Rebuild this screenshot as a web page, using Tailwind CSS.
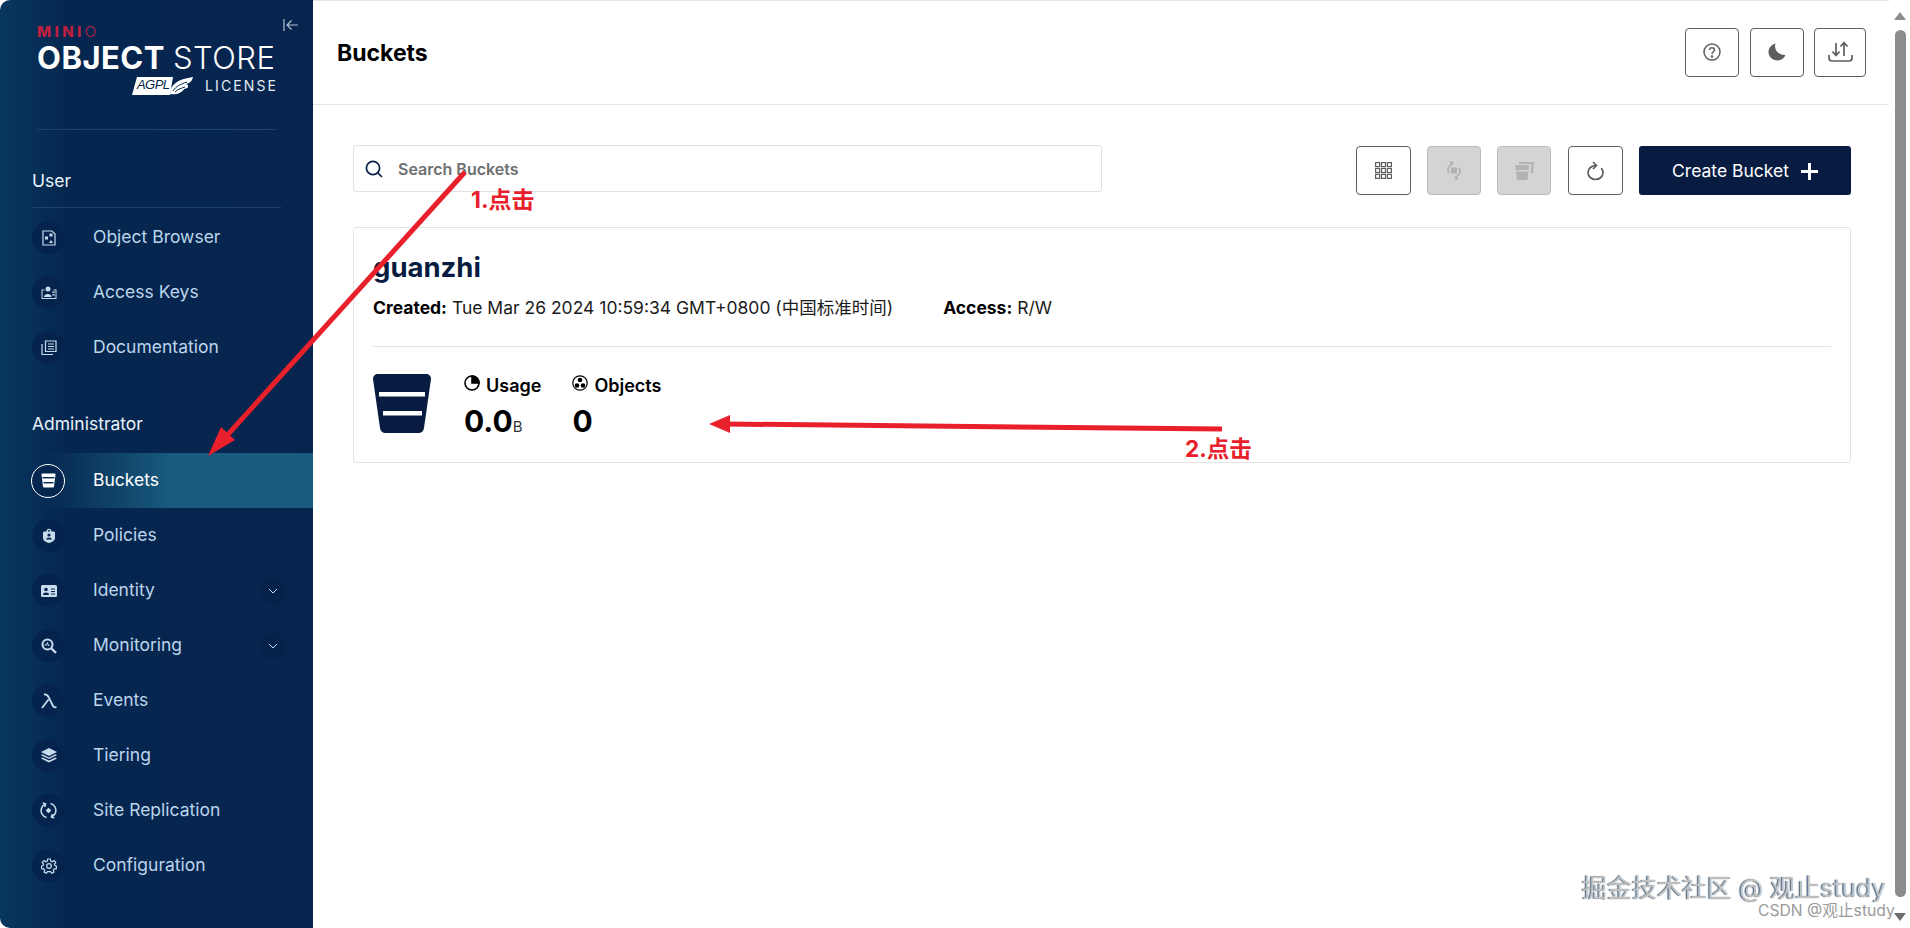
<!DOCTYPE html>
<html lang="en">
  <head>
    <meta charset="UTF-8" />
    <title>MinIO Console - Buckets</title>
    <script src="https://cdn.jsdelivr.net/npm/@tailwindcss/browser@4"></script>
  </head>
  <body class="bg-white font-['Inter','Noto_Sans_CJK_SC',sans-serif]">
    <div class="relative flex h-[928px] w-[1910px] overflow-hidden">
      <!-- sidebar -->
      <aside class="flex h-full w-[313px] shrink-0 flex-col rounded-l-[10px] bg-linear-to-r from-[#08365f] via-[#05274f] via-[22%] to-[#07244f]">
        <div class="relative mx-[37px] h-[130px] border-b border-[#1d4468] pt-[25px]">
          <div class="flex h-[13px] items-center text-[15px] leading-none tracking-[3.4px] text-[#bf2040]">
            <span class="font-extrabold">MINI</span><span class="font-light">O</span>
          </div>
          <div class="mt-[6px] flex h-[26px] items-center whitespace-nowrap text-[31px] leading-none tracking-[0.5px] text-white">
            <span class="font-bold">OBJECT</span><span class="ml-[8px] font-light">STORE</span>
          </div>
          <div class="mt-[6px] flex items-center justify-end gap-[11px]">
            <svg width="62" height="20" viewBox="0 0 62 20">
              <path d="M5 1H41L38 19H0Z" fill="#fff" />
              <path d="M38 18C38 8 47 3 61 1C60 5 58 7 54 8C58 9 56 13 52 13C50 17 44 19 38 18Z" fill="#fff" />
              <path d="M41 15C44 10 49 8 55 6M43 16C46 13 50 12 53 11" stroke="#05264f" fill="none" />
              <text x="5" y="13" font-family="Liberation Sans" font-style="italic" font-size="13" textLength="33" fill="#05264f">AGPL</text>
            </svg>
            <span class="mr-[-2px] text-[14px] leading-none tracking-[2.1px] text-[#e4ecf3]">LICENSE</span>
          </div>
          <svg class="absolute right-[-23px] top-[17px]" width="16" height="16" viewBox="0 0 16 16" fill="none" stroke="#aebfd0" stroke-width="1.2">
            <path d="M1 2V14M15 8H4M8.5 3.5L4 8L8.5 12.5" />
          </svg>
        </div>

        <div class="mx-[32px] mt-[37px] flex h-[41px] w-[249px] items-start border-b border-[#1d4468] text-[17.5px] leading-[28px] text-[#e9f2f9]">User</div>
        <nav class="flex flex-col pt-[2px] text-[17.5px] text-[#bcd5ec]">
          <div class="flex h-[55px] items-center">
            <span class="ml-[32px] flex size-[33px] items-center justify-center rounded-full bg-[#05244d]">
              <svg width="14" height="16" viewBox="0 0 14 16" fill="none" stroke="#c9dcee" stroke-width="1.2"><path d="M1 1H10L13 4V15H1Z" /><rect x="7.5" y="3.5" width="3" height="3" fill="#c9dcee" stroke="none" /><rect x="3" y="6.5" width="3" height="3" fill="#c9dcee" stroke="none" /><path d="M7 13L9 10L11 13Z" fill="#c9dcee" stroke="none" /></svg>
            </span>
            <span class="ml-[28px]">Object Browser</span>
          </div>
          <div class="flex h-[55px] items-center">
            <span class="ml-[32px] flex size-[33px] items-center justify-center rounded-full bg-[#05244d]">
              <svg width="16" height="14" viewBox="0 0 16 14" fill="#c9dcee"><path d="M0.5 3.5H3.5V4.5H1.5V12H14.5V4.5H12.5V3.5H15.5V13H0.5Z" /><circle cx="7" cy="3" r="2.5" /><path d="M3 11C3 7 10.5 7 10.5 11Z" /><rect x="11.2" y="5.5" width="2.5" height="1.4" /><rect x="11.2" y="8.2" width="2.5" height="1.4" /></svg>
            </span>
            <span class="ml-[28px]">Access Keys</span>
          </div>
          <div class="flex h-[55px] items-center">
            <span class="ml-[32px] flex size-[33px] items-center justify-center rounded-full bg-[#05244d]">
              <svg width="16" height="15" viewBox="0 0 16 15" fill="none" stroke="#c9dcee" stroke-width="1.2"><path d="M4.5 1H15V11.5H4.5Z" /><path d="M1 4V14.5H12" /><path d="M7 4H13M7 6.5H13M7 9H13" /></svg>
            </span>
            <span class="ml-[28px]">Documentation</span>
          </div>
        </nav>

        <div class="mx-[32px] mt-[35px] flex h-[41px] w-[249px] items-start text-[17.5px] leading-[28px] text-[#e9f2f9]">Administrator</div>
        <nav class="mt-[2px] flex flex-col text-[17.5px] text-[#bcd5ec]">
          <div class="flex h-[55px] items-center bg-linear-to-r from-transparent from-[15%] to-[#195b7f] to-[55%] text-white">
            <span class="ml-[31px] flex size-[34px] items-center justify-center rounded-full border border-white bg-[#05264f]">
              <svg width="15" height="15" viewBox="0 0 15 15" fill="#fff"><path d="M0.5 1.5C0.5 0.9 0.9 0.5 1.5 0.5H13.5C14.1 0.5 14.5 0.9 14.5 1.5L13 13.5C12.9 14.2 12.5 14.5 12 14.5H3C2.5 14.5 2.1 14.2 2 13.5Z" /><rect x="1.5" y="4" width="12" height="1.4" fill="#05264f" /><rect x="2.5" y="9" width="10" height="1.4" fill="#05264f" /></svg>
            </span>
            <span class="ml-[28px]">Buckets</span>
          </div>
          <div class="flex h-[55px] items-center">
            <span class="ml-[32px] flex size-[33px] items-center justify-center rounded-full bg-[#05244d]">
              <svg width="12" height="15" viewBox="0 0 12 15" fill="#c9dcee"><path d="M3.5 3.5C3.5 -0.3 8.5 -0.3 8.5 3.5H10.5C11.3 3.5 12 4 12 5V10C12 12.5 9 14.5 6 15C3 14.5 0 12.5 0 10V5C0 4 0.7 3.5 1.5 3.5ZM4.8 3.5H7.2C7.2 1.5 4.8 1.5 4.8 3.5Z" /><circle cx="6" cy="7" r="1.6" fill="#05264f" /><path d="M3 11.5C3 8.8 9 8.8 9 11.5Z" fill="#05264f" /></svg>
            </span>
            <span class="ml-[28px]">Policies</span>
          </div>
          <div class="flex h-[55px] items-center">
            <span class="ml-[32px] flex size-[33px] items-center justify-center rounded-full bg-[#05244d]">
              <svg width="16" height="12" viewBox="0 0 16 12" fill="#c9dcee"><rect width="16" height="12" rx="1.5" /><circle cx="5" cy="4.5" r="1.8" fill="#05264f" /><path d="M2 10C2 6.8 8 6.8 8 10Z" fill="#05264f" /><path d="M10 4H14M10 6.5H14M10 9H14" stroke="#05264f" /></svg>
            </span>
            <span class="ml-[28px]">Identity</span>
            <span class="ml-auto mr-[27px] flex size-[26px] items-center justify-center rounded-full bg-[#05224b]">
              <svg width="10" height="6" viewBox="0 0 10 6" fill="none" stroke="#c9dcee"><path d="M1 1L5 5L9 1" /></svg>
            </span>
          </div>
          <div class="flex h-[55px] items-center">
            <span class="ml-[32px] flex size-[33px] items-center justify-center rounded-full bg-[#05244d]">
              <svg width="16" height="16" viewBox="0 0 16 16" fill="none" stroke="#c9dcee"><circle cx="6.5" cy="6.5" r="5" stroke-width="2" /><path d="M10.5 10.5L15 15" stroke-width="2.4" /><path d="M3.5 7H5.5L6.5 4.5L7.5 8L8.5 7" stroke-width="1" /></svg>
            </span>
            <span class="ml-[28px]">Monitoring</span>
            <span class="ml-auto mr-[27px] flex size-[26px] items-center justify-center rounded-full bg-[#05224b]">
              <svg width="10" height="6" viewBox="0 0 10 6" fill="none" stroke="#c9dcee"><path d="M1 1L5 5L9 1" /></svg>
            </span>
          </div>
          <div class="flex h-[55px] items-center">
            <span class="ml-[32px] flex size-[33px] items-center justify-center rounded-full bg-[#05244d]">
              <svg width="16" height="16" viewBox="0 0 16 16" fill="none" stroke="#c9dcee" stroke-width="1.8"><path d="M3 1.5C6 1 7 2.5 8 5L12 13C12.5 14 13.5 14.5 15.5 14.2M7.5 6.5L1 15" /></svg>
            </span>
            <span class="ml-[28px]">Events</span>
          </div>
          <div class="flex h-[55px] items-center">
            <span class="ml-[32px] flex size-[33px] items-center justify-center rounded-full bg-[#05244d]">
              <svg width="16" height="15" viewBox="0 0 16 15" fill="#c9dcee"><path d="M8 0L16 4L8 8L0 4Z" /><path d="M1.5 6.2L8 9.4L14.5 6.2L16 7.2L8 11L0 7.2Z" /><path d="M1.5 9.4L8 12.6L14.5 9.4L16 10.6L8 14.5L0 10.6Z" /></svg>
            </span>
            <span class="ml-[28px]">Tiering</span>
          </div>
          <div class="flex h-[55px] items-center">
            <span class="ml-[32px] flex size-[33px] items-center justify-center rounded-full bg-[#05244d]">
              <svg width="17" height="17" viewBox="0 0 17 17" fill="none" stroke="#c9dcee" stroke-width="1.5"><path d="M6.5 15.5C2.5 14.5 0.5 10.5 1.3 7C1.8 4.8 3.2 3.2 5 2.2M2.8 1L5.6 2L4.6 5" /><path d="M10.5 1.5C14.5 2.5 16.5 6.5 15.7 10C15.2 12.2 13.8 13.8 12 14.8M14.2 16L11.4 15L12.4 12" /><rect x="6.5" y="6.5" width="4" height="4" fill="#c9dcee" stroke="none" transform="rotate(45 8.5 8.5)" /></svg>
            </span>
            <span class="ml-[28px]">Site Replication</span>
          </div>
          <div class="flex h-[55px] items-center">
            <span class="ml-[32px] flex size-[33px] items-center justify-center rounded-full bg-[#05244d]">
              <svg width="16" height="16" viewBox="0 0 24 24" fill="none" stroke="#c9dcee" stroke-width="1.8"><circle cx="12" cy="12" r="3.5" /><path d="M10 1.5H14L14.6 4.6L16.9 5.6L19.6 3.8L22.2 6.9L20.2 9.3L21 11.5L23.5 12.5L22.8 16.3L19.8 16.4L18.4 18.4L19.4 21.3L16 22.8L14.3 20.4H9.7L8 22.8L4.6 21.3L5.6 18.4L4.2 16.4L1.2 16.3L0.5 12.5L3 11.5L3.8 9.3L1.8 6.9L4.4 3.8L7.1 5.6L9.4 4.6Z" /></svg>
            </span>
            <span class="ml-[28px]">Configuration</span>
          </div>
        </nav>
      </aside>

      <!-- main -->
      <main class="flex min-w-0 flex-1 flex-col border-t border-[#e6e6e6]">
        <header class="flex h-[104px] shrink-0 items-center justify-between border-b border-[#e5e5e5] pl-[24px] pr-[23px]">
          <h1 class="pt-[2px] text-[23px] font-bold text-black">Buckets</h1>
          <div class="flex pb-[1px]">
            <button class="mr-[11px] flex h-[49px] w-[54px] items-center justify-center rounded-[4px] border border-[#5e5e5e]">
              <svg width="18" height="18" viewBox="0 0 18 18" fill="none" stroke="#5e5e5e" stroke-width="1.5"><circle cx="9" cy="9" r="8" /><path d="M6.5 7C6.5 3.8 11.5 4 11.5 7C11.5 8.8 9 8.8 9 11" /><circle cx="9" cy="13.5" r="0.6" /></svg>
            </button>
            <button class="mr-[10px] flex h-[49px] w-[54px] items-center justify-center rounded-[4px] border border-[#5e5e5e]">
              <svg width="18" height="18" viewBox="0 0 18 18" fill="#5e5e5e"><path d="M7.5 0.5C5.5 6 10 12.5 17.5 12C16 15.5 12.8 17.5 9.5 17.5C4.5 17.5 0.5 13.5 0.5 9C0.5 5 3.5 1.5 7.5 0.5Z" /></svg>
            </button>
            <button class="flex h-[49px] w-[52px] items-center justify-center rounded-[4px] border border-[#5e5e5e]">
              <svg width="25" height="22" viewBox="0 0 25 22" fill="none" stroke="#5e5e5e" stroke-width="1.7"><path d="M1 14V17C1 19 2 20 4 20H21C23 20 24 19 24 17V14" /><path d="M8 2V14M4.5 10.5L8 14.5L11.5 10.5" /><path d="M16 15V2M12.5 5.5L16 1.5L19.5 5.5" /></svg>
            </button>
          </div>
        </header>

        <section class="px-[40px] pr-[38px] pt-[40px]">
          <div class="flex items-start justify-between">
            <label class="flex h-[47px] w-[749px] items-center rounded-[3px] border border-[#e2e2e2] pl-[11px]">
              <svg width="18" height="18" viewBox="0 0 18 18" fill="none" stroke="#0b2048" stroke-width="1.7"><circle cx="8" cy="8" r="6.6" /><path d="M12.8 12.8L17 17" /></svg>
              <span class="ml-[15px] text-[16px] font-semibold text-[#6f6f6f]">Search Buckets</span>
            </label>
            <div class="flex items-center pt-px">
              <button class="mr-[16px] flex h-[49px] w-[55px] items-center justify-center rounded-[4px] border border-[#5e5e5e]">
                <svg width="17" height="17" viewBox="0 0 17 17" fill="none" stroke="#5e5e5e" stroke-width="1.2"><rect x="0.6" y="0.6" width="4" height="4" /><rect x="6.5" y="0.6" width="4" height="4" /><rect x="12.4" y="0.6" width="4" height="4" /><rect x="0.6" y="6.5" width="4" height="4" /><rect x="6.5" y="6.5" width="4" height="4" /><rect x="12.4" y="6.5" width="4" height="4" /><rect x="0.6" y="12.4" width="4" height="4" /><rect x="6.5" y="12.4" width="4" height="4" /><rect x="12.4" y="12.4" width="4" height="4" /></svg>
              </button>
              <button class="mr-[16px] flex h-[49px] w-[54px] items-center justify-center rounded-[4px] border border-[#b9bbbb] bg-[#d3d5d5]">
                <svg width="16" height="19" viewBox="0 0 16 19" fill="none" stroke="#b2b4b4" stroke-width="1.8"><path d="M6 2L3 6C1.5 8 1.5 10 3 12M4 1L6.5 1.5L6 4" /><path d="M10 17L13 13C14.5 11 14.5 9 13 7M12 18L9.5 17.5L10 15" /><rect x="5" y="6.5" width="6" height="6" fill="#b2b4b4" stroke="none" /></svg>
              </button>
              <button class="mr-[17px] flex h-[49px] w-[54px] items-center justify-center rounded-[4px] border border-[#b9bbbb] bg-[#d3d5d5]">
                <svg width="19" height="18" viewBox="0 0 19 18" fill="#b2b4b4"><path d="M0 3H14L12.5 18H2Z" /><rect x="1" y="8" width="12" height="1.5" fill="#d3d5d5" /><path d="M4 0H19L18 11H15.5L16.5 2H4Z" /></svg>
              </button>
              <button class="mr-[16px] flex h-[49px] w-[55px] items-center justify-center rounded-[4px] border border-[#5e5e5e]">
                <svg width="17" height="20" viewBox="0 0 17 20" fill="none" stroke="#5e5e5e" stroke-width="1.7"><path d="M9 4.5C4.5 4.5 1 7.5 1 11.5C1 15.5 4.5 18.5 8.5 18.5C12.5 18.5 16 15.5 16 11.5C16 9.8 15.3 8.3 14.2 7.2" /><path d="M6 1L9.5 4.5L6 8" /></svg>
              </button>
              <button class="flex h-[49px] w-[212px] items-center justify-center gap-[12px] rounded-[3px] bg-[#081c42] pt-px text-[17.5px] text-white">
                Create Bucket
                <svg width="17" height="17" viewBox="0 0 17 17" fill="none" stroke="#fff" stroke-width="3"><path d="M8.5 0V17M0 8.5H17" /></svg>
              </button>
            </div>
          </div>

          <article class="mt-[32px] h-[236px] rounded-[3px] border border-[#e4e4e4] px-[19px] pt-[21px]">
            <h2 class="text-[27.5px] font-bold leading-[36px] text-[#081c42]">guanzhi</h2>
            <div class="mt-[10px] flex h-[26px] items-center text-[17.5px] text-[#1b1b1b]">
              <span><b class="font-bold text-black">Created:</b> Tue Mar 26 2024 10:59:34 GMT+0800 (中国标准时间)</span>
              <span class="ml-[50px]"><b class="font-bold text-black">Access:</b> R/W</span>
            </div>
            <div class="mt-[25px] flex border-t border-[#e4e4e4] pt-[27px]">
              <svg width="58" height="59" viewBox="0 0 58 59" fill="#081c42"><path d="M0 5C0 2 2 0 5 0H53C56 0 58 2 58 5L51 54C50.5 57 48.5 59 45.5 59H12.5C9.5 59 7.5 57 7 54Z" /><rect x="6" y="18" width="46" height="4.5" fill="#fff" /><rect x="10" y="37" width="39" height="4.5" fill="#fff" /></svg>
              <div class="ml-[33px] flex flex-col">
                <div class="flex h-[22px] items-center gap-[6px] text-[18px] font-semibold text-black">
                  <svg width="16" height="16" viewBox="0 0 16 16" class="mb-[5px]" fill="none" stroke="#000" stroke-width="1.6"><circle cx="8" cy="8" r="7" /><path d="M8 1V8H15A7 7 0 0 0 8 1Z" fill="#000" /></svg>
                  Usage
                </div>
                <div class="mt-[7px] flex items-baseline text-[30px] font-bold leading-[36px] text-black">0.0<span class="text-[15px] font-normal text-[#333]">B</span></div>
              </div>
              <div class="ml-[31px] flex flex-col">
                <div class="flex h-[22px] items-center gap-[6px] text-[18px] font-semibold text-black">
                  <svg width="16" height="16" viewBox="0 0 16 16" class="mb-[5px]" fill="none" stroke="#000" stroke-width="1.2"><circle cx="8" cy="8" r="7.2" /><circle cx="8" cy="5" r="2.3" fill="#000" stroke="none" /><circle cx="5" cy="10.5" r="2.3" fill="#000" stroke="none" /><circle cx="11" cy="10.5" r="2.3" fill="#000" stroke="none" /></svg>
                  Objects
                </div>
                <div class="mt-[7px] text-[30px] font-bold leading-[36px] text-black">0</div>
              </div>
            </div>
          </article>
        </section>
      </main>

      <!-- scrollbar -->
      <div class="flex w-[21px] shrink-0 flex-col items-end pr-[4px] pt-[12px]">
        <div class="h-0 w-0 self-end border-x-[6px] border-b-[8px] border-x-transparent border-b-[#8c8c8c]"></div>
        <div class="mt-[10px] h-[867px] w-[11px] rounded-full bg-[#8c8c8c]"></div>
        <div class="mt-[16px] h-0 w-0 border-x-[6px] border-t-[8px] border-x-transparent border-t-[#6e6e6e]"></div>
      </div>

      <!-- annotations drawn over the screenshot -->
      <svg class="pointer-events-none absolute left-0 top-0" width="1910" height="928" viewBox="0 0 1910 928" fill="#e8202c">
        <path d="M465 172L222 441" stroke="#e8202c" stroke-width="5" fill="none" />
        <path d="M208 456L221 427L235 440Z" />
        <path d="M1222 429L725 424" stroke="#e8202c" stroke-width="5" fill="none" />
        <path d="M709 424L730 415L730 433Z" />
      </svg>
      <span class="absolute left-[471px] top-[186px] text-[23px] font-bold leading-[28px] text-[#e8202c]">1.点击</span>
      <span class="absolute left-[1185px] top-[435px] text-[22.5px] font-bold leading-[28px] text-[#e8202c]">2.点击</span>
      <span class="absolute left-[1582px] top-[871px] text-[25px] leading-[34px] text-[#c4c4c4] [text-shadow:-1px_0_1px_#444]">掘金技术社区 @ 观止study</span>
      <span class="absolute left-[1758px] top-[901px] text-[15.7px] leading-[20px] text-[#9a9a9a]">CSDN @观止study</span>
    </div>
  </body>
</html>
